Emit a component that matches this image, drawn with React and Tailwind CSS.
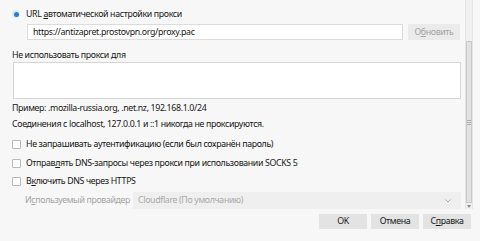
import React from 'react';

const font = { fontFamily: '"Noto Sans", "Open Sans", sans-serif' };

function Checkbox({ children }) {
  return (
    <div className="flex items-center h-[14px] pl-[12px]">
      <div className="w-[9px] h-[9px] border border-[#b9b9b9] bg-white rounded-[1px]" />
      <span className="ml-[5px] text-[#161616] whitespace-nowrap">{children}</span>
    </div>
  );
}

function Button({ children }) {
  return (
    <div className="w-[48px] h-[15px] bg-[#e3e3e3] flex items-center justify-center text-[#161616]">
      {children}
    </div>
  );
}

export default function App() {
  return (
    <div
      className="w-[480px] h-[241px] bg-[#f7f7f7] overflow-hidden flex flex-col text-[8.8px] tracking-[-0.35px] leading-none"
      style={font}
    >
      {/* Scroll area */}
      <div className="flex h-[209px]">
        <div className="flex-1 flex flex-col pt-[6px]">
          <div className="flex items-center h-[16px] pl-[12px]">
            <div className="w-[8px] h-[8px] rounded-full bg-[#dbe7f3] flex items-center justify-center">
              <div className="w-[5px] h-[5px] rounded-full bg-[#2e7bd0]" />
            </div>
            <span className="ml-[6px] text-[#161616]">
              URL <span className="underline">а</span>втоматической настройки прокси
            </span>
          </div>

          <div className="flex mt-[2px] pl-[27px] pr-[5px] h-[16px]">
            <div className="w-[376px] h-[16px] bg-white border border-[#dcdcdc] flex items-center pl-[5px] text-[#161616]">
              https://antizapret.prostovpn.org/proxy.pac
            </div>
            <div className="ml-[5px] flex-1 bg-[#ebebeb] flex items-center justify-center text-[#a3a3a3]">
              О<span className="underline">б</span>новить
            </div>
          </div>

          <div className="mt-[8px] h-[14px] flex items-center pl-[12px] text-[#161616]">
            Не использовать прокси для
          </div>

          <div className="ml-[13px] mr-[4px] h-[37px] bg-white border border-[#d6d6d6]" />

          <div className="mt-[2px] h-[14px] flex items-center pl-[12px] text-[#161616]">
            Пример: .mozilla-russia.org, .net.nz, 192.168.1.0/24
          </div>
          <div className="mt-[2px] h-[14px] flex items-center pl-[12px] text-[#161616]">
            Соединения с localhost, 127.0.0.1 и ::1 никогда не проксируются.
          </div>

          <div className="mt-[6px]">
            <Checkbox>Не запрашивать аутентификацию (если был сохранён пароль)</Checkbox>
          </div>
          <div className="mt-[5px]">
            <Checkbox>
              Отправ<span className="underline">л</span>ять DNS-запросы через прокси при использовании SOCKS 5
            </Checkbox>
          </div>
          <div className="mt-[4px]">
            <Checkbox>
              В<span className="underline">к</span>лючить DNS через HTTPS
            </Checkbox>
          </div>

          <div className="mt-[4px] h-[17px] flex items-center pl-[25px] pr-[4px]">
            <span className="w-[108px] shrink-0 whitespace-nowrap text-[#a3a3a3]">
              И<span className="underline">с</span>пользуемый провайдер
            </span>
            <div className="flex-1 h-full bg-[#efefef] flex items-center justify-between pl-[5px] pr-[10px] text-[#a9a9a9]">
              <span>Cloudflare (По умолчанию)</span>
              <svg width="6" height="4" viewBox="0 0 6 4">
                <path d="M0.5 0.5 L3 3 L5.5 0.5" fill="none" stroke="#a0a0a0" strokeWidth="0.9" />
              </svg>
            </div>
          </div>
        </div>

        {/* Scrollbar */}
        <div className="w-[8px] mr-[7px] flex flex-col border-l border-r border-[#e4e4e4] bg-[#f0f0f0]">
          <div className="h-[41px]" />
          <div className="flex-1 bg-[#e2e2e2] border border-[#c9c9c9] flex items-center justify-center">
            <div className="flex flex-col gap-[1px]">
              <div className="w-[4px] h-[1px] bg-[#b0b0b0]" />
              <div className="w-[4px] h-[1px] bg-[#b0b0b0]" />
              <div className="w-[4px] h-[1px] bg-[#b0b0b0]" />
            </div>
          </div>
          <div className="h-[6px] flex items-center justify-center">
            <svg width="4" height="3" viewBox="0 0 4 3">
              <path d="M0 0 L4 0 L2 3 Z" fill="#8a8a8a" />
            </svg>
          </div>
        </div>
      </div>

      {/* Buttons */}
      <div className="mt-[5px] flex justify-end gap-[4px] pr-[9px]">
        <Button>OK</Button>
        <Button>Отмена</Button>
        <Button>
          С<span className="underline">п</span>равка
        </Button>
      </div>
    </div>
  );
}
